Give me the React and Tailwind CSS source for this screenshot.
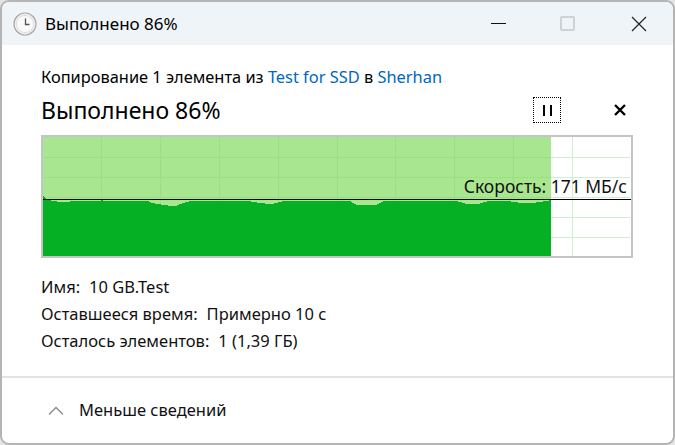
import React from 'react';

const vLines = [101, 160, 219, 278, 337, 395, 454, 513, 572];
const hLines = [157, 177, 197, 217, 237];

// upper edge of the dark area, in page coordinates
const edge = [
  [43, 196], [45, 198], [48, 200], [53, 201], [60, 202], [68, 202], [70, 201.5], [76, 201], [78, 201.5], [84, 201],
  [100, 201], [102, 200], [104, 201], [146, 201], [148, 201], [152, 203], [158, 204], [164, 205], [172, 206],
  [176, 206], [180, 204], [186, 202], [192, 201], [250, 201], [252, 202], [262, 203], [268, 204], [274, 203.5],
  [280, 202], [283, 201], [350, 201], [353, 203], [357, 205], [376, 205], [380, 203], [384, 201], [456, 201],
  [460, 202], [466, 204], [472, 204.5], [478, 204], [484, 202], [490, 201], [500, 201], [508, 201], [514, 202],
  [522, 203], [532, 203], [540, 202], [546, 201], [551, 200],
];
const edgePath = 'M43 256 ' + edge.map(([x, y]) => `L${x} ${y}`).join(' ') + ' L551 256 Z';

function SpeedChart() {
  return (
    <div className="relative h-[123px] w-[592px] border-2 border-[#c4c4c4] bg-white">
      <svg className="absolute -left-[2px] -top-[2px] h-[123px] w-[592px]" viewBox="41 135 592 123" shapeRendering="crispEdges">
        <rect x="43" y="137" width="508" height="119" fill="#a9e690" />
        {vLines.map((x) => (
          <rect key={x} x={x} y="137" width="1" height="119" fill={x < 551 ? '#98df86' : '#cdeed2'} />
        ))}
        {hLines.map((y) => (
          <g key={y}>
            <rect x="43" y={y} width="508" height="1" fill="#98df86" />
            <rect x="551" y={y} width="79" height="1" fill="#cdeed2" />
          </g>
        ))}
        <path d={edgePath} fill="#06b025" />
        <rect x="43" y="199" width="588" height="1" fill="#000000" />
      </svg>
      <span className="absolute right-[4px] top-[37px] text-[17.5px] leading-[24px] text-[#111]">Скорость: 171 МБ/с</span>
    </div>
  );
}

function ClockIcon() {
  return (
    <svg width="24" height="24" viewBox="0 0 24 24">
      <circle cx="12" cy="12" r="11" fill="#f1f1f1" stroke="#a8a8a8" strokeWidth="1.2" />
      <circle cx="12" cy="12" r="8.6" fill="#fafafa" stroke="#dddddd" strokeWidth="1" />
      <path d="M12.5 6.5V12.5H16.5" fill="none" stroke="#555" strokeWidth="1.3" />
    </svg>
  );
}

export default function App() {
  return (
    <div className="h-[445px] w-[675px] bg-[#e4e4e4] font-['Noto_Sans',sans-serif] text-black">
      <div className="flex h-full flex-col overflow-hidden rounded-[9px] border-2 border-[#b4b4b4] bg-white">
        <div className="flex h-[43px] shrink-0 items-center bg-[#eff4f9] pl-[11px]">
          <ClockIcon />
          <span className="ml-[8px] text-[17px]">Выполнено 86%</span>
          <div className="ml-auto flex items-center">
            <div className="h-px w-[15px] bg-[#111]" />
            <div className="ml-[54px] h-[15px] w-[15px] rounded-[2px] border-2 border-[#cfd2d4]" />
            <svg className="ml-[56px] mr-[26px]" width="16" height="16" viewBox="0 0 16 16">
              <path d="M1 1L15 15M15 1L1 15" stroke="#222" strokeWidth="1.2" />
            </svg>
          </div>
        </div>

        <div className="flex-1 pl-[39px] pr-[39px]">
          <div className="mt-[21px] whitespace-nowrap text-[16.4px] leading-[22px]">
            Копирование 1 элемента из <span className="text-[#0067c0]">Test for SSD</span> в <span className="text-[#0067c0]">Sherhan</span>
          </div>
          <div className="mt-[6px] flex h-[32px] items-center">
            <span className="text-[23px]">Выполнено 86%</span>
            <div className="ml-auto mr-[6px] flex items-center">
              <div className="flex h-[26px] w-[28px] items-center justify-center gap-[5px] border border-dotted border-black">
                <div className="h-[11px] w-[2px] bg-black" />
                <div className="h-[11px] w-[2px] bg-black" />
              </div>
              <svg className="ml-[52px] mr-[1px]" width="14" height="14" viewBox="0 0 14 14">
                <path d="M2 2L12 12M12 2L2 12" stroke="#000" strokeWidth="2.4" />
              </svg>
            </div>
          </div>
          <div className="mt-[9px]">
            <SpeedChart />
          </div>
          <div className="mt-[18px] flex flex-col gap-[5px] text-[16.5px] leading-[22px] text-[#111]">
            <div className="flex gap-[9px]"><span>Имя:</span><span>10 GB.Test</span></div>
            <div className="flex gap-[9px]"><span>Оставшееся время:</span><span>Примерно 10 с</span></div>
            <div className="flex gap-[9px]"><span>Осталось элементов:</span><span>1 (1,39 ГБ)</span></div>
          </div>
        </div>

        <div className="flex h-[67px] shrink-0 items-center border-t-2 border-[#e3e3e3] pl-[46px]">
          <svg width="16" height="10" viewBox="0 0 16 10">
            <path d="M1 8.5L8 1.5L15 8.5" fill="none" stroke="#8a8a8a" strokeWidth="1.3" />
          </svg>
          <span className="ml-[15px] text-[16.5px] text-[#111]">Меньше сведений</span>
        </div>
      </div>
    </div>
  );
}
